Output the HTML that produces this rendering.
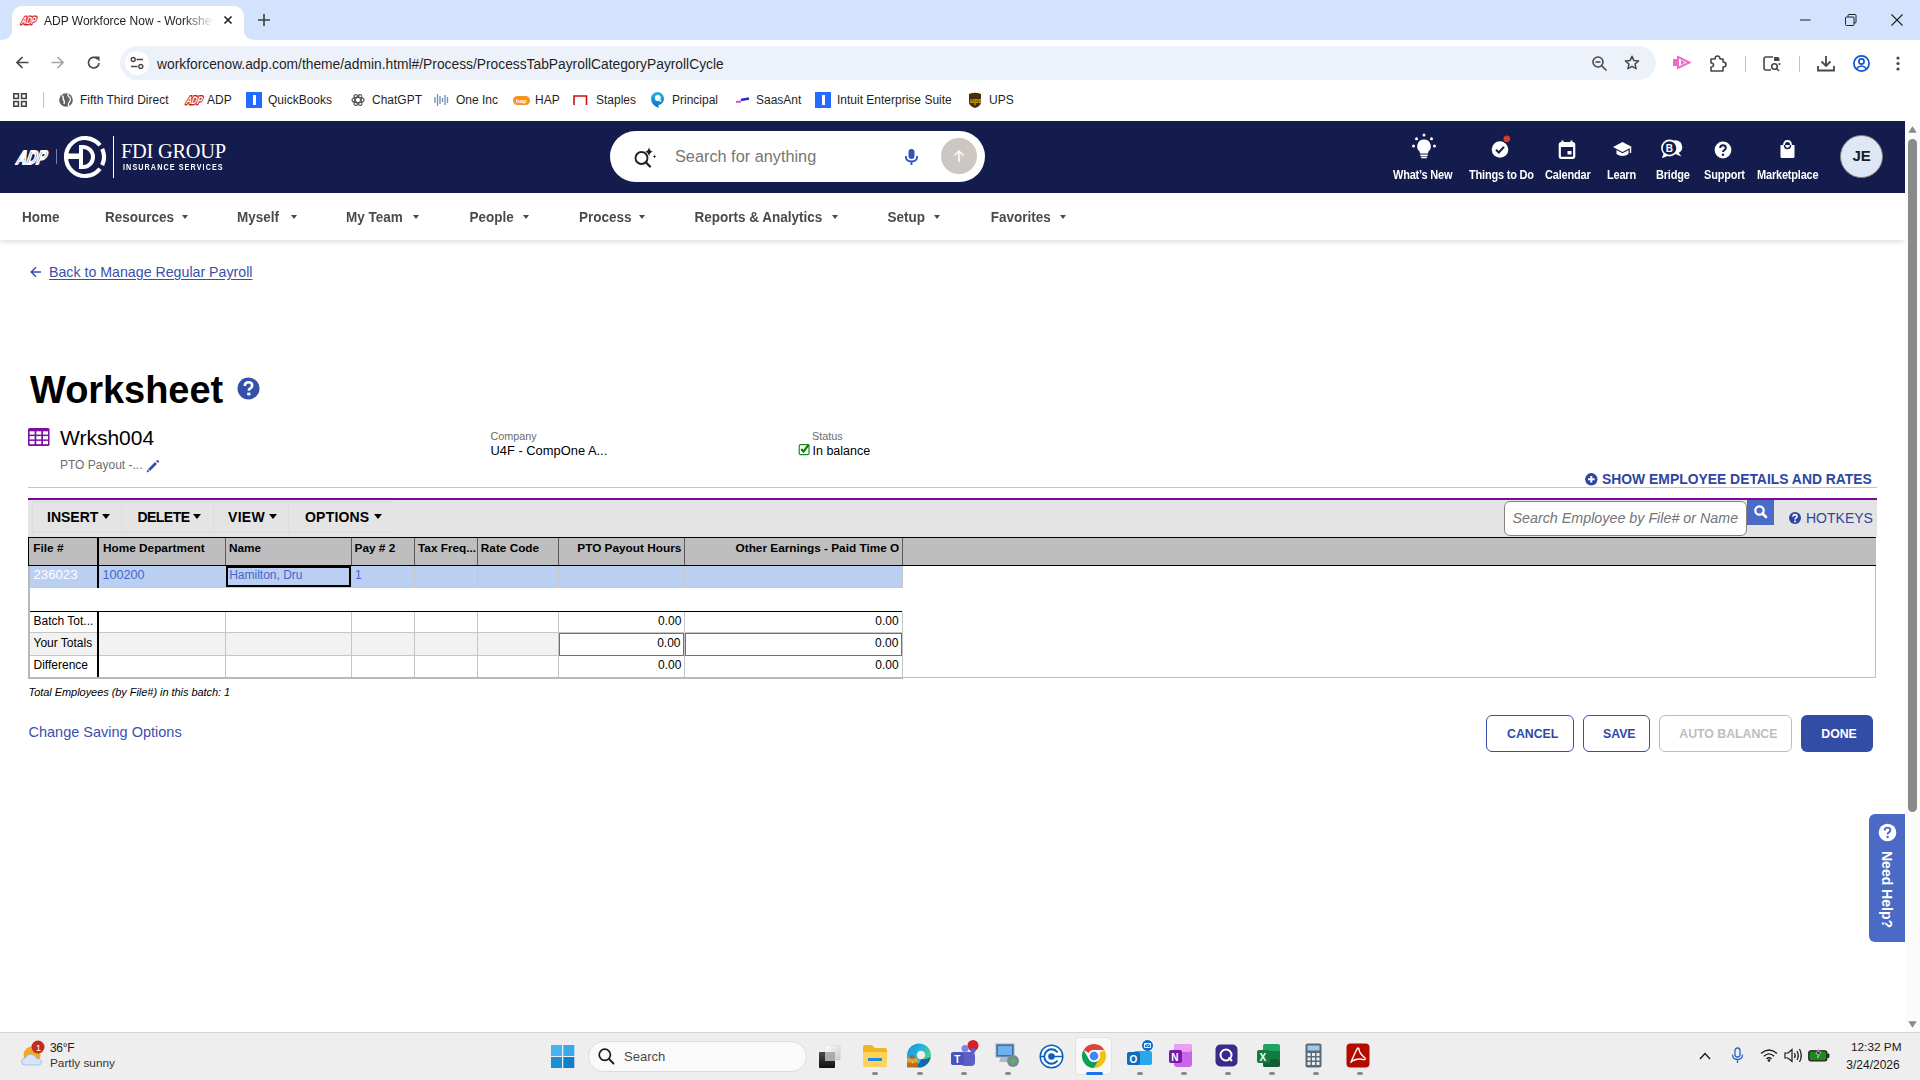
<!DOCTYPE html>
<html><head><meta charset="utf-8">
<style>
*{box-sizing:border-box;margin:0;padding:0}
html,body{width:1920px;height:1080px;overflow:hidden;background:#fff;font-family:"Liberation Sans",sans-serif;position:relative}
.a{position:absolute}
.t{position:absolute;white-space:nowrap;line-height:1}
svg{position:absolute;overflow:visible}
/* browser chrome */
#tabstrip{left:0;top:0;width:1920px;height:40px;background:#d3e3fd}
#tab{left:12px;top:6px;width:232px;height:34px;background:#fff;border-radius:10px 10px 0 0}
#toolbar{left:0;top:40px;width:1920px;height:81px;background:#fff}
#omni{left:120px;top:46px;width:1536px;height:34px;background:#edf2fa;border-radius:17px}
#hdr{left:0;top:121px;width:1905px;height:72px;background:#141b4d}
#nav{left:0;top:193px;width:1905px;height:47px;background:#fff;box-shadow:0 2px 5px rgba(0,0,0,.13)}
#sb{left:1905px;top:121px;width:15px;height:911px;background:#fbfbfb}
#taskbar{left:0;top:1032px;width:1920px;height:48px;background:#eeeeee;border-top:1px solid #d3d3d3}
.nv{top:210.7px;font-size:13.5px;font-weight:700;color:#4a4a4a;transform:scaleY(1.09);transform-origin:0 11px}
.tri{top:215px;width:0;height:0;border-left:3.6px solid transparent;border-right:3.6px solid transparent;border-top:4px solid #4a4a4a}
.tb{top:501px;height:32px;border:1px solid #d5dfe3;border-right:none}
.tbt{top:510px;font-size:14px;font-weight:700;color:#000}
.tt{top:514px;width:0;height:0;border-left:4px solid transparent;border-right:4px solid transparent;border-top:5px solid #000}
.th{top:543px;font-size:11.8px;font-weight:700;color:#000}
.tr{top:568.5px;font-size:12px;color:#4466cc}
.ttl{font-size:12px;color:#000}
.btn{top:728px;font-size:12.3px;font-weight:700}
.dot{top:1072px;width:6px;height:3px;border-radius:1.5px;background:#8a8a8a}
.bm{font-size:12px;color:#1f1f1f;top:94px}
</style></head><body>
<!-- ===== TAB STRIP ===== -->
<div id="tabstrip" class="a"></div>
<div id="tab" class="a"></div>
<!-- tab bottom outward curves -->
<svg style="left:0;top:30px" width="14" height="10"><path d="M0 10 Q12 10 12 0 L12 10 Z" fill="#fff"/></svg>
<svg style="left:244px;top:30px" width="14" height="10"><path d="M0 0 Q0 10 12 10 L0 10 Z" fill="#fff"/></svg>
<!-- ADP favicon -->
<svg style="left:20px;top:15px" width="17" height="10" viewBox="0 0 17 10"><text x="3.5" y="8.6" transform="skewX(-18)" font-family="Liberation Sans" font-weight="700" font-size="10.5" textLength="14.5" lengthAdjust="spacingAndGlyphs" fill="#fff" stroke="#d0271d" stroke-width="2.8" stroke-linejoin="round" paint-order="stroke">ADP</text></svg>
<div class="t" style="left:44px;top:15px;font-size:12px;color:#1f1f1f;width:170px;overflow:hidden;-webkit-mask-image:linear-gradient(90deg,#000 140px,transparent 170px)">ADP Workforce Now - Worksheet</div>
<svg style="left:224px;top:16px" width="8" height="8"><path d="M0.5 0.5 L7.5 7.5 M7.5 0.5 L0.5 7.5" stroke="#1f1f1f" stroke-width="1.6"/></svg>
<svg style="left:258px;top:14px" width="12" height="12"><path d="M6 0 V12 M0 6 H12" stroke="#3c3c3c" stroke-width="1.6"/></svg>
<!-- window controls -->
<svg style="left:1800px;top:19px" width="11" height="2"><path d="M0 1 H10.5" stroke="#1f1f1f" stroke-width="1"/></svg>
<svg style="left:1845px;top:14px" width="12" height="12"><path d="M3 2.5 V1.5 Q3 0.5 4 0.5 H10 Q11 0.5 11 1.5 V8 Q11 9 10 9 H9" fill="none" stroke="#1f1f1f" stroke-width="1"/><rect x="0.5" y="3" width="8.5" height="8.5" rx="1" fill="none" stroke="#1f1f1f" stroke-width="1"/></svg>
<svg style="left:1891px;top:14px" width="12" height="12"><path d="M0.5 0.5 L11.5 11.5 M11.5 0.5 L0.5 11.5" stroke="#1f1f1f" stroke-width="1.1"/></svg>

<!-- ===== TOOLBAR ===== -->
<div id="toolbar" class="a"></div>
<svg style="left:16px;top:56px" width="13" height="13"><path d="M12.5 6.5 H1.5 M6.5 1 L1 6.5 L6.5 12" fill="none" stroke="#474747" stroke-width="1.7"/></svg>
<svg style="left:51px;top:56px" width="13" height="13"><path d="M0.5 6.5 H11.5 M6.5 1 L12 6.5 L6.5 12" fill="none" stroke="#a6a6a6" stroke-width="1.7"/></svg>
<svg style="left:87px;top:56px" width="14" height="14"><path d="M12 7 A5.3 5.3 0 1 1 10.3 2.8" fill="none" stroke="#474747" stroke-width="1.7"/><path d="M7.5 0.5 H12.5 V5.5 Z" fill="#474747"/></svg>
<div id="omni" class="a"></div>
<div class="a" style="left:125px;top:51px;width:24px;height:24px;border-radius:12px;background:#fff"></div>
<svg style="left:130px;top:56px" width="14" height="14"><circle cx="3.2" cy="3.5" r="2" fill="none" stroke="#474747" stroke-width="1.4"/><path d="M6.5 3.5 H13" stroke="#474747" stroke-width="1.5"/><circle cx="10.8" cy="10.5" r="2" fill="none" stroke="#474747" stroke-width="1.4"/><path d="M1 10.5 H7.5" stroke="#474747" stroke-width="1.5"/></svg>
<div class="t" style="left:157px;top:58px;font-size:13.8px;color:#1f1f1f">workforcenow.adp.com/theme/admin.html#/Process/ProcessTabPayrollCategoryPayrollCycle</div>
<svg style="left:1592px;top:56px" width="16" height="16"><circle cx="6" cy="6" r="5" fill="none" stroke="#474747" stroke-width="1.6"/><path d="M3.5 6 H8.5 M9.7 9.7 L14.5 14.5" stroke="#474747" stroke-width="1.6"/></svg>
<svg style="left:1624px;top:55px" width="16" height="16"><path d="M8 1.3 L9.9 5.6 L14.6 6 L11 9.1 L12.1 13.7 L8 11.3 L3.9 13.7 L5 9.1 L1.4 6 L6.1 5.6 Z" fill="none" stroke="#474747" stroke-width="1.5" stroke-linejoin="round"/></svg>
<svg style="left:1673px;top:56px" width="18" height="13"><rect x="0" y="3" width="5" height="7" fill="#f06bc3"/><path d="M5 1 L16.5 6.5 L5 12 Z" fill="none" stroke="#f06bc3" stroke-width="2"/><path d="M8 4 L12 6.5 L8 9 Z" fill="#f06bc3"/></svg>
<svg style="left:1710px;top:55px" width="17" height="17"><path d="M1 4 H5 Q5 1 7.5 1 Q10 1 10 4 H13 V7 Q16 7 16 9.5 Q16 12 13 12 V16 H1 V12 Q3.5 12 3.5 10 Q3.5 8 1 8 Z" fill="none" stroke="#474747" stroke-width="1.6" stroke-linejoin="round"/></svg>
<div class="a" style="left:1745px;top:56px;width:1px;height:16px;background:#a8c7fa"></div>
<svg style="left:1763px;top:56px" width="18" height="16"><path d="M10 1 H3 Q1 1 1 3 V12 Q1 14 3 14 H8" fill="none" stroke="#474747" stroke-width="1.6"/><path d="M11 1 H14.5 Q16.5 1 16.5 3 V5 H11 Z" fill="#474747"/><path d="M16.5 7 V9" stroke="#474747" stroke-width="1.6"/><circle cx="11.5" cy="10.5" r="2.8" fill="none" stroke="#474747" stroke-width="1.6"/><path d="M13.5 12.5 L16 15" stroke="#474747" stroke-width="1.6"/></svg>
<div class="a" style="left:1799px;top:56px;width:1px;height:16px;background:#a8c7fa"></div>
<svg style="left:1817px;top:55px" width="18" height="17"><path d="M9 1 V11 M4.5 6.5 L9 11 L13.5 6.5" fill="none" stroke="#474747" stroke-width="1.8"/><path d="M1 11 V15.5 H17 V11" fill="none" stroke="#474747" stroke-width="1.8"/></svg>
<svg style="left:1853px;top:55px" width="17" height="17"><circle cx="8.5" cy="8.5" r="7.6" fill="none" stroke="#0b57d0" stroke-width="1.7"/><circle cx="8.5" cy="6.5" r="2.6" fill="none" stroke="#0b57d0" stroke-width="1.6"/><path d="M3.6 13.6 Q8.5 8.5 13.4 13.6" fill="none" stroke="#0b57d0" stroke-width="1.6"/></svg>
<svg style="left:1896px;top:56px" width="4" height="15"><circle cx="2" cy="2" r="1.6" fill="#474747"/><circle cx="2" cy="7.5" r="1.6" fill="#474747"/><circle cx="2" cy="13" r="1.6" fill="#474747"/></svg>

<!-- ===== BOOKMARKS ===== -->
<svg style="left:13px;top:93px" width="14" height="14"><rect x="0.8" y="0.8" width="4.6" height="4.6" fill="none" stroke="#474747" stroke-width="1.6"/><rect x="8.6" y="0.8" width="4.6" height="4.6" fill="none" stroke="#474747" stroke-width="1.6"/><rect x="0.8" y="8.6" width="4.6" height="4.6" fill="none" stroke="#474747" stroke-width="1.6"/><rect x="8.6" y="8.6" width="4.6" height="4.6" fill="none" stroke="#474747" stroke-width="1.6"/></svg>
<div class="a" style="left:43px;top:92px;width:1px;height:16px;background:#a8c7fa"></div>
<svg style="left:59px;top:93px" width="14" height="14"><circle cx="7" cy="7" r="6.8" fill="#5f6368"/><path d="M3 2.5 Q5 4 4 6 Q6 8 5 11 M9 1 Q8.5 3.5 11 4.5 Q12 7 10.5 9 Q9 10 9.5 13" fill="none" stroke="#fff" stroke-width="1.3"/></svg>
<div class="t bm" style="left:80px">Fifth Third Direct</div>
<svg style="left:185px;top:94px" width="19" height="11" viewBox="0 0 19 11"><text x="3.5" y="9.5" transform="skewX(-18)" font-family="Liberation Sans" font-weight="700" font-size="11" textLength="16" lengthAdjust="spacingAndGlyphs" fill="#fff" stroke="#d0271d" stroke-width="2.8" stroke-linejoin="round" paint-order="stroke">ADP</text></svg>
<div class="t bm" style="left:207px">ADP</div>
<div class="a" style="left:246px;top:92px;width:16px;height:16px;background:#236cff"></div>
<div class="a" style="left:253px;top:95px;width:2.5px;height:10px;background:#fff"></div>
<div class="t bm" style="left:268px">QuickBooks</div>
<svg style="left:351px;top:93px" width="14" height="14"><g fill="none" stroke="#555" stroke-width="1.2"><ellipse cx="7" cy="7" rx="6" ry="2.6"/><ellipse cx="7" cy="7" rx="6" ry="2.6" transform="rotate(60 7 7)"/><ellipse cx="7" cy="7" rx="6" ry="2.6" transform="rotate(120 7 7)"/></g></svg>
<div class="t bm" style="left:372px">ChatGPT</div>
<svg style="left:434px;top:93px" width="16" height="14"><g stroke="#6b8fb8" stroke-width="1.3"><path d="M1 4 V10 M3.5 1 V13 M6 3 V11 M8.5 5 V9 M11 2 V12 M13.5 4 V10"/></g></svg>
<div class="t bm" style="left:456px">One Inc</div>
<div class="a" style="left:513px;top:96px;width:17px;height:9px;border-radius:5px;background:#f7931e"></div>
<div class="t" style="left:516px;top:97.5px;font-size:6px;color:#fff;font-weight:700">hap</div>
<div class="t bm" style="left:535px">HAP</div>
<svg style="left:573px;top:95px" width="15" height="10"><path d="M1 10 V1 H13.5 V10" fill="none" stroke="#cc1111" stroke-width="1.6"/></svg>
<div class="t bm" style="left:596px">Staples</div>
<svg style="left:650px;top:91px" width="16" height="18"><defs><linearGradient id="pg" x1="0" y1="0" x2="0" y2="1"><stop offset="0" stop-color="#1fb8e0"/><stop offset="1" stop-color="#0a6fc0"/></linearGradient></defs><path d="M7.5 1 A6.5 6.5 0 0 1 14 7.5 A6.5 6.5 0 0 1 8.5 13.9 L8.5 17 Q1 14 1 7.5 A6.5 6.5 0 0 1 7.5 1 Z" fill="url(#pg)"/><circle cx="7.8" cy="7" r="3" fill="#fff"/><path d="M8.5 10 L11 9 L11.5 11 Z" fill="#fff"/></svg>
<div class="t bm" style="left:672px">Principal</div>
<svg style="left:735px;top:96px" width="15" height="8"><path d="M1 6 L6 5.5" stroke="#e04bd0" stroke-width="2"/><path d="M6 4 L14 2.5" stroke="#2b2bc8" stroke-width="2.5"/></svg>
<div class="t bm" style="left:756px">SaasAnt</div>
<div class="a" style="left:815px;top:92px;width:16px;height:16px;background:#236cff"></div>
<div class="a" style="left:822px;top:95px;width:2.5px;height:10px;background:#fff"></div>
<div class="t bm" style="left:837px">Intuit Enterprise Suite</div>
<svg style="left:968px;top:92px" width="14" height="16"><path d="M1 2 Q7 -0.5 13 2 V10 Q13 14 7 16 Q1 14 1 10 Z" fill="#4a2c0a"/><text x="2" y="10.5" font-family="Liberation Sans" font-weight="700" font-size="6.5" fill="#f5b400">ups</text></svg>
<div class="t bm" style="left:989px">UPS</div>

<!-- ===== ADP HEADER ===== -->
<div id="hdr" class="a"></div>
<svg style="left:15px;top:148px" width="34" height="17" viewBox="0 0 34 17"><text x="6" y="15.5" transform="skewX(-20)" font-family="Liberation Sans" font-weight="700" font-size="19" textLength="29" lengthAdjust="spacingAndGlyphs" fill="none" stroke="#fff" stroke-width="2.1" stroke-linejoin="round">ADP</text></svg>
<div class="a" style="left:56px;top:149px;width:1px;height:15px;background:#7a80a8"></div>
<svg style="left:62px;top:134px" width="48" height="46" viewBox="0 0 48 46">
<path d="M37.97 11.30 A19 19 0 1 0 37.97 34.70" fill="none" stroke="#fff" stroke-width="4.2"/>
<path d="M40.22 14.97 A19 19 0 0 1 40.22 31.03" fill="none" stroke="#fff" stroke-width="4.2"/>
<path d="M17 11 H21 A12 12 0 0 1 21 35 H17 Z M21 15 V31 A8 8 0 0 0 21 15 Z" fill="#fff" fill-rule="evenodd"/>
<rect x="3" y="19.5" width="16" height="5.5" fill="#fff"/>
</svg>
<div class="a" style="left:113px;top:136px;width:1.3px;height:42px;background:#fff"></div>
<div class="t" style="left:121px;top:141px;font-family:'Liberation Serif',serif;font-size:20.4px;color:#fff;letter-spacing:-0.25px">FDI GROUP</div>
<div class="t" style="left:122.8px;top:161.5px;font-size:9.4px;color:#fff;font-weight:700;letter-spacing:1.45px;transform:scaleX(0.765);transform-origin:left">INSURANCE SERVICES</div>
<!-- search -->
<div class="a" style="left:610px;top:131px;width:375px;height:51px;border-radius:25.5px;background:#fff"></div>
<svg style="left:634px;top:146px" width="24" height="23"><circle cx="7.5" cy="12" r="6" fill="none" stroke="#1f1f1f" stroke-width="1.9"/><path d="M11.8 16.3 L16 20.5" stroke="#1f1f1f" stroke-width="2.3" stroke-linecap="round"/><path d="M15 1 Q15.5 5 19 5.8 Q15.5 6.6 15 10.5 Q14.5 6.6 11 5.8 Q14.5 5 15 1 Z" fill="#1f1f1f"/><path d="M20.5 8.5 Q20.7 10.2 22 10.5 Q20.7 10.8 20.5 12.5 Q20.3 10.8 19 10.5 Q20.3 10.2 20.5 8.5 Z" fill="#1f1f1f"/></svg>
<div class="t" style="left:675px;top:147.5px;font-size:16.3px;color:#767676">Search for anything</div>
<svg style="left:904px;top:148px" width="15" height="18"><rect x="4.5" y="1" width="6" height="10" rx="3" fill="#3552b5"/><path d="M1.8 8 Q1.8 13.5 7.5 13.5 Q13.2 13.5 13.2 8" fill="none" stroke="#3552b5" stroke-width="1.8"/><path d="M7.5 13.5 V17" stroke="#3552b5" stroke-width="1.8"/></svg>
<div class="a" style="left:941px;top:138px;width:36px;height:36px;border-radius:18px;background:#ccc7c2"></div>
<svg style="left:952px;top:149px" width="14" height="14"><path d="M7 13 V2 M2.5 6.5 L7 2 L11.5 6.5" fill="none" stroke="#fff" stroke-width="1.5"/></svg>
<!-- header icons -->
<svg style="left:1410px;top:132px" width="28" height="28" viewBox="0 0 28 28">
<g fill="#fff"><circle cx="14" cy="3" r="1.5"/><circle cx="3.5" cy="14" r="1.5"/><circle cx="24.5" cy="14" r="1.5"/><circle cx="6.5" cy="6.8" r="1.5"/><circle cx="21.5" cy="6.8" r="1.5"/>
<path d="M14 7.5 A6.8 6.8 0 0 1 18.4 19.5 L18 21.5 H10 L9.6 19.5 A6.8 6.8 0 0 1 14 7.5 Z"/><rect x="10.3" y="22.5" width="7.4" height="1.8" rx="0.5"/><rect x="11" y="24.8" width="6" height="1.5" rx="0.7"/></g></svg>
<svg style="left:1490px;top:134px" width="24" height="25" viewBox="0 0 24 25">
<circle cx="10" cy="15.5" r="8.3" fill="#fff"/><path d="M6 15.8 L8.8 18.5 L14 12.8" fill="none" stroke="#141b4d" stroke-width="2"/>
<circle cx="16.8" cy="4.8" r="4" fill="#d43b2a" stroke="#141b4d" stroke-width="1.3"/></svg>
<svg style="left:1558px;top:140px" width="18" height="19" viewBox="0 0 18 19">
<path d="M4.5 0.5 V3 M13.5 0.5 V3" stroke="#fff" stroke-width="2"/><rect x="1.8" y="3" width="14.4" height="14.8" rx="1.5" fill="none" stroke="#fff" stroke-width="2.2"/><rect x="1.8" y="3" width="14.4" height="4" fill="#fff"/><rect x="9.5" y="11" width="4" height="3.5" fill="#fff"/></svg>
<svg style="left:1612px;top:141px" width="21" height="17" viewBox="0 0 21 17">
<path d="M10.5 1 L20 6 L10.5 11 L1 6 Z" fill="#fff"/><path d="M4.5 9 V13 Q10.5 17 16.5 13 V9 L10.5 12.3 Z" fill="#fff"/><path d="M18.5 7 V12" stroke="#fff" stroke-width="1.4"/></svg>
<svg style="left:1660px;top:139px" width="25" height="20" viewBox="0 0 25 20">
<circle cx="15.5" cy="8" r="6.8" fill="#fff"/><path d="M18 13 L21.5 17.5 L14 14.5 Z" fill="#fff"/>
<circle cx="9.5" cy="9" r="7.6" fill="#141b4d" stroke="#fff" stroke-width="1.6"/><path d="M4.5 14 L2.5 18.5 L8 16.3" fill="#fff" stroke="#fff" stroke-width="1"/>
<text x="5.8" y="12.8" font-family="Liberation Sans" font-weight="700" font-size="10" fill="#fff">B</text></svg>
<svg style="left:1714px;top:141px" width="18" height="18" viewBox="0 0 18 18">
<circle cx="9" cy="9" r="8.4" fill="#fff"/><path d="M6.2 7 Q6.2 4.2 9 4.2 Q11.8 4.2 11.8 6.8 Q11.8 8.4 10 9.3 Q9 9.8 9 11" fill="none" stroke="#141b4d" stroke-width="2"/><circle cx="9" cy="13.7" r="1.2" fill="#141b4d"/></svg>
<svg style="left:1779px;top:140px" width="17" height="19" viewBox="0 0 17 19">
<path d="M1.5 5 H15.5 V16.5 Q15.5 18 14 18 H3 Q1.5 18 1.5 16.5 Z" fill="#fff"/>
<path d="M5 5 Q5 1 8.5 1 Q12 1 12 5" fill="none" stroke="#fff" stroke-width="1.8"/>
<path d="M5.5 5 Q5.5 8.5 8.5 8.5 Q11.5 8.5 11.5 5" fill="none" stroke="#141b4d" stroke-width="1.5"/></svg>
<div class="t" style="left:1393px;top:169.8px;font-size:11px;color:#fff;font-weight:700;letter-spacing:-0.2px;transform:scaleY(1.14);transform-origin:0 10px">What&#8217;s New</div>
<div class="t" style="left:1469px;top:169.8px;font-size:11px;color:#fff;font-weight:700;letter-spacing:-0.2px;transform:scaleY(1.14);transform-origin:0 10px">Things to Do</div>
<div class="t" style="left:1545px;top:169.8px;font-size:11px;color:#fff;font-weight:700;letter-spacing:-0.2px;transform:scaleY(1.14);transform-origin:0 10px">Calendar</div>
<div class="t" style="left:1607px;top:169.8px;font-size:11px;color:#fff;font-weight:700;letter-spacing:-0.2px;transform:scaleY(1.14);transform-origin:0 10px">Learn</div>
<div class="t" style="left:1656px;top:169.8px;font-size:11px;color:#fff;font-weight:700;letter-spacing:-0.2px;transform:scaleY(1.14);transform-origin:0 10px">Bridge</div>
<div class="t" style="left:1704px;top:169.8px;font-size:11px;color:#fff;font-weight:700;letter-spacing:-0.2px;transform:scaleY(1.14);transform-origin:0 10px">Support</div>
<div class="t" style="left:1757px;top:169.8px;font-size:11px;color:#fff;font-weight:700;letter-spacing:-0.2px;transform:scaleY(1.14);transform-origin:0 10px">Marketplace</div>
<div class="a" style="left:1840px;top:135px;width:43px;height:43px;border-radius:21.5px;background:#dde7f6;border:1px solid #8c8070"></div>
<div class="t" style="left:1852.5px;top:147.8px;font-size:15px;color:#1c1c1c;font-weight:700">JE</div>
<div id="nav" class="a"></div>
<div class="t nv" style="left:22px">Home</div>
<div class="t nv" style="left:105px">Resources</div>
<div class="a tri" style="left:181.5px"></div>
<div class="t nv" style="left:237px">Myself</div>
<div class="a tri" style="left:290.7px"></div>
<div class="t nv" style="left:346px">My Team</div>
<div class="a tri" style="left:413.2px"></div>
<div class="t nv" style="left:469.5px">People</div>
<div class="a tri" style="left:523.3px"></div>
<div class="t nv" style="left:579px">Process</div>
<div class="a tri" style="left:638.6px"></div>
<div class="t nv" style="left:694.4px">Reports &amp; Analytics</div>
<div class="a tri" style="left:832.3px"></div>
<div class="t nv" style="left:887.5px">Setup</div>
<div class="a tri" style="left:934.3px"></div>
<div class="t nv" style="left:990.7px">Favorites</div>
<div class="a tri" style="left:1059.6px"></div>

<!-- ===== CONTENT ===== -->
<svg style="left:30px;top:266px" width="12" height="12"><path d="M11 6 H1.5 M6 1.2 L1.2 6 L6 10.8" fill="none" stroke="#3a50a8" stroke-width="1.5"/></svg>
<div class="t" style="left:49px;top:265px;font-size:14.2px;color:#3a50a8;text-decoration:underline;text-underline-offset:2px">Back to Manage Regular Payroll</div>
<div class="t" style="left:30px;top:371px;font-size:38px;font-weight:700;color:#000;letter-spacing:-0.05px">Worksheet</div>
<svg style="left:237px;top:377px" width="23" height="23"><circle cx="11.5" cy="11.5" r="11" fill="#3550a8"/><path d="M7.8 9 Q7.8 5.3 11.5 5.3 Q15.2 5.3 15.2 8.6 Q15.2 10.6 13 11.6 Q11.8 12.2 11.8 13.8" fill="none" stroke="#fff" stroke-width="2.6"/><rect x="10.2" y="15.6" width="3.2" height="2.8" fill="#fff"/></svg>
<svg style="left:28px;top:428px" width="22" height="18"><rect x="0" y="0" width="21.5" height="18" rx="1.5" fill="#7a0fa0"/><g fill="#fff"><rect x="1.6" y="3.3" width="5" height="3.3"/><rect x="8.3" y="3.3" width="5" height="3.3"/><rect x="15" y="3.3" width="5" height="3.3"/><rect x="1.6" y="8.1" width="5" height="3.3"/><rect x="8.3" y="8.1" width="5" height="3.3"/><rect x="15" y="8.1" width="5" height="3.3"/><rect x="1.6" y="12.9" width="5" height="3.3"/><rect x="8.3" y="12.9" width="5" height="3.3"/><rect x="15" y="12.9" width="5" height="3.3"/></g></svg>
<div class="t" style="left:60px;top:427px;font-size:21px;color:#000">Wrksh004</div>
<div class="t" style="left:60px;top:459px;font-size:12px;color:#6e6e6e;letter-spacing:0px">PTO Payout -...</div>
<svg style="left:146px;top:460px" width="13" height="13"><path d="M2 9 L9 2 L11 4 L4 11 Z" fill="#3550a8"/><path d="M10 1 L11 0 Q12 0 13 1 L13 2 L12 3 Z" fill="#3550a8"/><path d="M1.5 9.5 L3.5 11.5 L0.5 12.5 Z" fill="#3550a8"/><path d="M2.8 10.2 L3.2 10.6" stroke="#fff" stroke-width="0.8"/></svg>
<div class="t" style="left:490.5px;top:431px;font-size:10.8px;color:#6a6a6a">Company</div>
<div class="t" style="left:490.5px;top:444.5px;font-size:12.9px;color:#000">U4F - CompOne A...</div>
<div class="t" style="left:812px;top:431px;font-size:10.8px;color:#6a6a6a">Status</div>
<svg style="left:798px;top:442px" width="14" height="14"><rect x="1.2" y="2.7" width="9.8" height="10" rx="1.5" fill="none" stroke="#1a8a1a" stroke-width="1.2"/><path d="M3.2 7 L5.5 9.6 L10.8 2.5" fill="none" stroke="#0a7d0a" stroke-width="2.2"/></svg>
<div class="t" style="left:812.5px;top:444.5px;font-size:12.5px;color:#000">In balance</div>
<svg style="left:1585px;top:473px" width="13" height="13"><circle cx="6.3" cy="6.3" r="6.2" fill="#2f45a0"/><path d="M6.3 3 V9.6 M3 6.3 H9.6" stroke="#fff" stroke-width="2"/></svg>
<div class="t" style="left:1602px;top:473px;font-size:13.9px;font-weight:700;color:#2f45a0">SHOW EMPLOYEE DETAILS AND RATES</div>
<div class="a" style="left:28px;top:487px;width:1849px;height:1px;background:#c4c4c4"></div>
<div class="a" style="left:28px;top:498px;width:1849px;height:2px;background:#7b0a9b"></div>
<!-- toolbar -->
<div class="a" style="left:28px;top:500px;width:1849px;height:37px;background:#e4e4e4"></div>
<div class="a tb" style="left:32px;width:89px"></div>
<div class="a tb" style="left:121px;width:92px"></div>
<div class="a tb" style="left:213px;width:75px"></div>
<div class="a tb" style="left:288px;width:106px"></div>
<div class="t tbt" style="left:47px">INSERT</div><div class="a tt" style="left:102px"></div>
<div class="t tbt" style="left:137.5px;letter-spacing:-0.55px">DELETE</div><div class="a tt" style="left:193px"></div>
<div class="t tbt" style="left:228px;letter-spacing:0.3px">VIEW</div><div class="a tt" style="left:269px"></div>
<div class="t tbt" style="left:305px;letter-spacing:0.2px">OPTIONS</div><div class="a tt" style="left:374px"></div>
<div class="a" style="left:1504px;top:500.5px;width:243px;height:35px;border:1px solid #8c8478;border-radius:6px;background:#fff"></div>
<div class="t" style="left:1512.5px;top:511px;font-size:14.3px;font-style:italic;color:#757575">Search Employee by File# or Name</div>
<div class="a" style="left:1747px;top:500px;width:27px;height:25px;background:#4a6cc8"></div>
<svg style="left:1754px;top:505px" width="14" height="14"><circle cx="5.5" cy="5.5" r="4.2" fill="none" stroke="#fff" stroke-width="2.2"/><path d="M8.5 8.5 L12 12" stroke="#fff" stroke-width="2.6" stroke-linecap="round"/></svg>
<svg style="left:1789px;top:512px" width="13" height="13"><circle cx="6" cy="6" r="6" fill="#2f45a0"/><path d="M4 4.8 Q4 2.6 6 2.6 Q8 2.6 8 4.5 Q8 5.6 6.8 6.1 Q6.1 6.5 6.1 7.5" fill="none" stroke="#fff" stroke-width="1.6"/><rect x="5.2" y="8.6" width="1.8" height="1.6" fill="#fff"/></svg>
<div class="t" style="left:1806px;top:510.5px;font-size:14px;color:#2f45a0">HOTKEYS</div>
<div class="a" style="left:28px;top:565px;width:2px;height:114px;background:#b8b8b8"></div>
<div class="a" style="left:1875px;top:565px;width:1px;height:113px;background:#c0c0c0"></div>
<div class="a" style="left:28px;top:677px;width:875px;height:2px;background:#b8b8b8"></div>
<div class="a" style="left:903px;top:677px;width:973px;height:1px;background:#c0c0c0"></div>
<div class="a" style="left:28px;top:537px;width:1848px;height:29px;background:#bebebe;border-top:1px solid #000;border-bottom:1px solid #000;border-left:1px solid #000"></div>
<div class="a" style="left:225px;top:538px;width:1px;height:27px;background:#5a5a5a"></div>
<div class="a" style="left:351px;top:538px;width:1px;height:27px;background:#5a5a5a"></div>
<div class="a" style="left:414px;top:538px;width:1px;height:27px;background:#5a5a5a"></div>
<div class="a" style="left:477px;top:538px;width:1px;height:27px;background:#5a5a5a"></div>
<div class="a" style="left:558px;top:538px;width:1px;height:27px;background:#5a5a5a"></div>
<div class="a" style="left:684px;top:538px;width:1px;height:27px;background:#5a5a5a"></div>
<div class="a" style="left:902px;top:538px;width:1px;height:27px;background:#5a5a5a"></div>
<div class="a" style="left:97px;top:538px;width:2px;height:27px;background:#000"></div>
<div class="t th" style="left:33.3px">File #</div>
<div class="t th" style="left:103px">Home Department</div>
<div class="t th" style="left:229px">Name</div>
<div class="t th" style="left:354.6px">Pay # 2</div>
<div class="t th" style="left:418px">Tax Freq...</div>
<div class="t th" style="left:480.8px">Rate Code</div>
<div class="t th" style="right:1238.7px">PTO Payout Hours</div>
<div class="t th" style="right:1020.8px">Other Earnings - Paid Time O</div>
<div class="a" style="left:30px;top:566px;width:872px;height:21px;background:#bbcff3"></div>
<div class="a" style="left:30px;top:587px;width:873px;height:1px;background:#c8c8c8"></div>
<div class="a" style="left:414px;top:566px;width:1px;height:21px;background:#c6c6c6"></div>
<div class="a" style="left:477px;top:566px;width:1px;height:21px;background:#c6c6c6"></div>
<div class="a" style="left:558px;top:566px;width:1px;height:21px;background:#c6c6c6"></div>
<div class="a" style="left:684px;top:566px;width:1px;height:21px;background:#c6c6c6"></div>
<div class="a" style="left:902px;top:566px;width:1px;height:22px;background:#c8c8c8"></div>
<div class="a" style="left:351px;top:566px;width:1px;height:21px;background:#c6c6c6"></div>
<div class="a" style="left:97px;top:566px;width:2px;height:22px;background:#000"></div>
<div class="a" style="left:226px;top:566px;width:125px;height:21px;border:2px solid #000"></div>
<div class="t" style="left:33.5px;top:567.5px;font-size:13.2px;color:#fff">236023</div>
<div class="t tr" style="left:102.5px;font-size:12.6px">100200</div>
<div class="t tr" style="left:229.2px">Hamilton, Dru</div>
<div class="t tr" style="left:355px">1</div>
<div class="a" style="left:30px;top:611px;width:872px;height:1px;background:#000"></div>
<div class="a" style="left:30px;top:633px;width:872px;height:22px;background:#f2f2f2"></div>
<div class="a" style="left:30px;top:632px;width:872px;height:1px;background:#c6c6c6"></div>
<div class="a" style="left:30px;top:655px;width:872px;height:1px;background:#c6c6c6"></div>
<div class="a" style="left:97px;top:611px;width:2px;height:66px;background:#000"></div>
<div class="a" style="left:225px;top:612px;width:1px;height:65px;background:#c6c6c6"></div>
<div class="a" style="left:351px;top:612px;width:1px;height:65px;background:#c6c6c6"></div>
<div class="a" style="left:414px;top:612px;width:1px;height:65px;background:#c6c6c6"></div>
<div class="a" style="left:477px;top:612px;width:1px;height:65px;background:#c6c6c6"></div>
<div class="a" style="left:558px;top:612px;width:1px;height:65px;background:#c6c6c6"></div>
<div class="a" style="left:684px;top:612px;width:1px;height:65px;background:#c6c6c6"></div>
<div class="a" style="left:902px;top:612px;width:1px;height:65px;background:#c6c6c6"></div>
<div class="a" style="left:559px;top:633px;width:125px;height:23px;background:#fff;border:1px solid #2e87a6"></div>
<div class="a" style="left:685px;top:633px;width:217px;height:23px;background:#fff;border:1px solid #2e87a6"></div>
<div class="t ttl" style="left:33.5px;top:614.5px">Batch Tot...</div>
<div class="t ttl" style="left:33.5px;top:636.5px">Your Totals</div>
<div class="t ttl" style="left:33.5px;top:658.5px">Difference</div>
<div class="t ttl" style="right:1238.7px;top:614.5px">0.00</div>
<div class="t ttl" style="right:1021.4px;top:614.5px">0.00</div>
<div class="t ttl" style="right:1239.5px;top:636.5px">0.00</div>
<div class="t ttl" style="right:1021.6px;top:636.5px">0.00</div>
<div class="t ttl" style="right:1238.7px;top:658.5px">0.00</div>
<div class="t ttl" style="right:1021.4px;top:658.5px">0.00</div>
<div class="t" style="left:28.5px;top:687px;font-size:11px;font-style:italic;color:#000;letter-spacing:-0.05px">Total Employees (by File#) in this batch: 1</div>
<div class="t" style="left:28.5px;top:725px;font-size:14.5px;color:#3a50b0">Change Saving Options</div>
<div class="a" style="left:1486px;top:715px;width:88px;height:37px;border:1px solid #3550b0;border-radius:6px"></div>
<div class="t btn" style="left:1507px;color:#2f47a8">CANCEL</div>
<div class="a" style="left:1583px;top:715px;width:67px;height:37px;border:1px solid #3550b0;border-radius:6px"></div>
<div class="t btn" style="left:1603px;color:#2f47a8">SAVE</div>
<div class="a" style="left:1659px;top:715px;width:133px;height:37px;border:1px solid #bdbdbd;border-radius:6px"></div>
<div class="t btn" style="left:1679.3px;color:#bdbdbd">AUTO BALANCE</div>
<div class="a" style="left:1801px;top:715px;width:72px;height:37px;background:#324da6;border-radius:6px"></div>
<div class="t btn" style="left:1821.3px;color:#fff">DONE</div>
<div class="a" style="left:1869px;top:814px;width:36px;height:128px;background:#4a6ac6;border-radius:6px 0 0 6px"></div>
<svg style="left:1877.5px;top:822.5px" width="19" height="19"><circle cx="9.5" cy="9.5" r="8.8" fill="#fff"/><path d="M6.6 7.6 Q6.6 4.6 9.5 4.6 Q12.4 4.6 12.4 7.2 Q12.4 8.7 10.6 9.6 Q9.6 10.1 9.6 11.6" fill="none" stroke="#4a6ac6" stroke-width="1.9"/><circle cx="9.6" cy="14" r="1.2" fill="#4a6ac6"/></svg>
<div class="t" style="left:1893.5px;top:851px;font-size:14px;font-weight:700;color:#fff;transform:rotate(90deg);transform-origin:0 0">Need Help?</div>
<div id="sb" class="a"></div>
<svg style="left:1908px;top:126px" width="9" height="7"><path d="M4.5 0.3 L8.8 6.8 H0.2 Z" fill="#8a8a8a"/></svg>
<div class="a" style="left:1908px;top:139px;width:9px;height:673px;border-radius:4.5px;background:#8a8a8a"></div>
<svg style="left:1908px;top:1021px" width="9" height="7"><path d="M0.2 0.2 H8.8 L4.5 6.8 Z" fill="#8a8a8a"/></svg>
<!-- ===== TASKBAR ===== -->
<div id="taskbar" class="a"></div>
<svg style="left:20px;top:1040px" width="30" height="30" viewBox="0 0 30 30">
<circle cx="12" cy="15" r="8.5" fill="#f5a623"/><path d="M5 25 Q1.5 25 1.5 21.5 Q1.5 18 5.5 18 Q7 14 11.5 14.5 Q15.5 15 16.5 18.5 Q21.5 18.5 21.5 22 Q21.5 25 18.5 25 Z" fill="#d6e4f7" stroke="#9db8e0" stroke-width="0.8"/>
<circle cx="18" cy="7" r="6.5" fill="#c42b1c"/><text x="15.8" y="10.5" font-family="Liberation Sans" font-size="9.5" fill="#fff">1</text></svg>
<div class="t" style="left:50px;top:1042px;font-size:12px;color:#1a1a1a;letter-spacing:-0.3px">36°F</div>
<div class="t" style="left:50px;top:1057.5px;font-size:11.8px;color:#333">Partly sunny</div>
<svg style="left:551px;top:1045px" width="24" height="23"><g fill="#1a9de6"><rect x="0" y="0" width="11" height="11" fill="#47b4f0"/><rect x="12.3" y="0" width="11" height="11" fill="#3aa8ea"/><rect x="0" y="12" width="11" height="11" fill="#1c8fd8"/><rect x="12.3" y="12" width="11" height="11" fill="#0f7fcc"/></g></svg>
<div class="a" style="left:588px;top:1041px;width:219px;height:31px;border-radius:15.5px;background:#fafafa;border:1px solid #dcdcdc"></div>
<svg style="left:598px;top:1048px" width="17" height="17"><circle cx="6.8" cy="6.8" r="5.6" fill="none" stroke="#1a1a1a" stroke-width="1.7"/><path d="M11 11 L15.5 15.5" stroke="#1a1a1a" stroke-width="1.8" stroke-linecap="round"/></svg>
<div class="t" style="left:624px;top:1050px;font-size:13px;color:#4a4a4a">Search</div>
<!-- task view -->
<svg style="left:818px;top:1045px" width="26" height="24"><defs><linearGradient id="tv1" x1="0" y1="0" x2="1" y2="1"><stop offset="0" stop-color="#ffffff"/><stop offset="1" stop-color="#c8c8c8"/></linearGradient><linearGradient id="tv2" x1="0" y1="0" x2="0" y2="1"><stop offset="0" stop-color="#4a4a4a"/><stop offset="1" stop-color="#111"/></linearGradient></defs><rect x="6.5" y="0.5" width="16" height="15" rx="1" fill="url(#tv1)" stroke="#e0e0e0" stroke-width="0.8"/><rect x="1" y="7" width="16" height="16" rx="1" fill="url(#tv2)"/><rect x="7" y="7" width="10" height="9" fill="#b8b8b8" opacity="0.9"/></svg>
<!-- explorer -->
<svg style="left:862px;top:1044px" width="26" height="24"><path d="M1 3 Q1 1 3 1 H10 L13 4 H23 Q25 4 25 6 V21 Q25 23 23 23 H3 Q1 23 1 21 Z" fill="#f1b521"/><rect x="1" y="8" width="24" height="15" rx="1.5" fill="#ffd35a"/><rect x="6" y="14" width="14" height="3" fill="#1e88e5"/></svg>
<div class="a dot" style="left:872px"></div>
<!-- edge -->
<svg style="left:906px;top:1043px" width="26" height="26" viewBox="0 0 26 26"><defs><linearGradient id="eg" x1="0" y1="0" x2="1" y2="0.6"><stop offset="0" stop-color="#1f8fe0"/><stop offset="0.55" stop-color="#25b5d8"/><stop offset="1" stop-color="#5fd66a"/></linearGradient></defs>
<circle cx="13" cy="12.5" r="12" fill="url(#eg)"/><circle cx="15" cy="12" r="4.2" fill="#eeeeee"/><path d="M15 16.2 Q20 17 24.5 14 Q23 22 15 24.5 Q11 24.5 9 23 Q13 22 15 16.2 Z" fill="#1462b8"/>
<rect x="1" y="15" width="11" height="9.5" rx="1.2" fill="#b86e12"/><rect x="1" y="15" width="11" height="4.5" rx="1" fill="#e3a03a"/><rect x="5" y="13" width="3" height="2.2" fill="none" stroke="#8a5a18" stroke-width="0.9"/><rect x="5.8" y="18.5" width="1.5" height="1.8" fill="#f5d36a"/></svg>
<div class="a dot" style="left:917px"></div>
<!-- teams -->
<svg style="left:949px;top:1039px" width="32" height="30"><circle cx="24" cy="6.5" r="5.5" fill="#d3202a"/><circle cx="16" cy="9.5" r="3.5" fill="#7b83eb"/><rect x="12" y="13" width="14" height="14" rx="4" fill="#5b5fc7"/><circle cx="24" cy="11.5" r="2.5" fill="#5b5fc7"/><rect x="2" y="13" width="13" height="13" rx="2" fill="#4b53bc"/><text x="5.2" y="23.5" font-family="Liberation Sans" font-weight="700" font-size="10" fill="#fff">T</text></svg>
<div class="a dot" style="left:961px"></div>
<!-- remote desktop -->
<svg style="left:994px;top:1042px" width="26" height="26"><rect x="2" y="2" width="18" height="13" fill="#3b6fb6" stroke="#9ab" stroke-width="1"/><rect x="4" y="4" width="14" height="9" fill="#6fb0f0"/><path d="M7 15 L5 20 H17 L15 15 Z" fill="#b0b8c0"/><circle cx="19" cy="19" r="6" fill="#7a8a90"/><path d="M16 19 H22 M19 16 V22" stroke="#4c4" stroke-width="1.5"/></svg>
<div class="a dot" style="left:1005px"></div>
<!-- C -->
<svg style="left:1038.5px;top:1043.5px" width="25" height="25"><circle cx="12.5" cy="12.5" r="11.3" fill="#fff" stroke="#0a5fbf" stroke-width="1.5"/><path d="M18.02 7.87 A7.2 7.2 0 1 0 18.02 17.13" fill="none" stroke="#0a5fbf" stroke-width="1.9" stroke-linecap="round"/><circle cx="12.5" cy="12.5" r="3.3" fill="#0a5fbf"/><path d="M12.5 12.5 H23.5 M1.5 12.5 H5.5" stroke="#0a5fbf" stroke-width="1.5"/></svg>
<!-- chrome active -->
<div class="a" style="left:1075px;top:1037px;width:37px;height:38px;border-radius:4px;background:#f8f8f8;border:1px solid #e3e3e3"></div>
<svg style="left:1081px;top:1043px" width="26" height="26" viewBox="0 0 26 26"><path d="M13 1 A12 12 0 0 1 23.4 7 H13 A6 6 0 0 0 7.8 10 L2.6 7 A12 12 0 0 1 13 1 Z" fill="#db4437"/><path d="M23.4 7 A12 12 0 0 1 13 25 L18.2 16 A6 6 0 0 0 18.2 10 Z" fill="#f4c20d"/><path d="M13 25 A12 12 0 0 1 2.6 7 L7.8 16 A6 6 0 0 0 18.2 16 Z" fill="#0f9d58"/><circle cx="13" cy="13" r="5.2" fill="#4285f4" stroke="#fff" stroke-width="1.6"/></svg>
<div class="a" style="left:1086px;top:1072px;width:17px;height:3px;border-radius:1.5px;background:#1a73e8"></div>
<!-- outlook -->
<svg style="left:1125px;top:1039px" width="30" height="30"><circle cx="22.5" cy="6.5" r="6" fill="#0a6ed1" stroke="#fff" stroke-width="1"/><path d="M19.5 4.5 H25.5 V8.5 H19.5 Z M19.5 4.5 L22.5 7 L25.5 4.5" fill="none" stroke="#fff" stroke-width="0.9"/><rect x="9" y="12" width="18" height="14" rx="2" fill="#28a8ea"/><rect x="2" y="13" width="13" height="13" rx="2" fill="#0f6cbd"/><text x="4.6" y="23.5" font-family="Liberation Sans" font-weight="700" font-size="10" fill="#fff">O</text></svg>
<div class="a dot" style="left:1137px"></div>
<!-- onenote -->
<svg style="left:1168px;top:1043px" width="25" height="25"><rect x="6" y="1" width="18" height="23" rx="3" fill="#ca64ea"/><rect x="6" y="1" width="18" height="8" rx="3" fill="#e8a0f5"/><rect x="1" y="7" width="13" height="13" rx="2" fill="#7719aa"/><text x="3.3" y="17.5" font-family="Liberation Sans" font-weight="700" font-size="10" fill="#fff">N</text></svg>
<div class="a dot" style="left:1181px"></div>
<!-- purple Q -->
<svg style="left:1215px;top:1044px" width="23" height="23"><rect x="0.5" y="0.5" width="22" height="22" rx="5" fill="#3b2a8a"/><circle cx="11" cy="11" r="5.5" fill="none" stroke="#fff" stroke-width="2"/><path d="M13.5 13.5 L17 17" stroke="#fff" stroke-width="2"/></svg>
<div class="a dot" style="left:1225px"></div>
<!-- excel -->
<svg style="left:1256px;top:1043px" width="25" height="25"><rect x="7" y="1" width="17" height="23" rx="2" fill="#21a366"/><rect x="7" y="8" width="17" height="8" fill="#107c41"/><rect x="7" y="16" width="17" height="8" rx="2" fill="#185c37"/><rect x="1" y="7" width="13" height="13" rx="2" fill="#107c41"/><text x="3.6" y="17.5" font-family="Liberation Sans" font-weight="700" font-size="10" fill="#fff">X</text></svg>
<div class="a dot" style="left:1269px"></div>
<!-- calculator -->
<svg style="left:1305px;top:1043px" width="17" height="25"><rect x="0.5" y="0.5" width="16" height="24" rx="2" fill="#5a6a78"/><rect x="2.5" y="2.5" width="12" height="5" fill="#9fc8ea"/><g fill="#e8eef2"><rect x="2.5" y="10" width="3" height="3"/><rect x="7" y="10" width="3" height="3"/><rect x="11.5" y="10" width="3" height="3"/><rect x="2.5" y="14.5" width="3" height="3"/><rect x="7" y="14.5" width="3" height="3"/><rect x="11.5" y="14.5" width="3" height="3"/><rect x="2.5" y="19" width="3" height="3"/><rect x="7" y="19" width="3" height="3"/><rect x="11.5" y="19" width="3" height="3"/></g></svg>
<div class="a dot" style="left:1313px"></div>
<!-- acrobat -->
<svg style="left:1346px;top:1043px" width="24" height="25"><rect x="0.5" y="0.5" width="23" height="24" rx="4" fill="#b30b00"/><path d="M5 19 Q8 12 11 6 Q12.5 4 13 6 Q13 10 19 15 Q20 17 17 16.5 Q12 15 6 18 Q4.5 20 5 19 Z" fill="none" stroke="#fff" stroke-width="1.4"/></svg>
<div class="a dot" style="left:1357px"></div>
<!-- tray -->
<svg style="left:1699px;top:1052px" width="12" height="8"><path d="M1 7 L6 1.5 L11 7" fill="none" stroke="#1a1a1a" stroke-width="1.4"/></svg>
<svg style="left:1731px;top:1047px" width="13" height="17"><rect x="4" y="1" width="5" height="9" rx="2.5" fill="none" stroke="#2b63c6" stroke-width="1.3"/><path d="M1.5 7.5 Q1.5 12.5 6.5 12.5 Q11.5 12.5 11.5 7.5 M6.5 12.5 V16" fill="none" stroke="#2b63c6" stroke-width="1.3"/></svg>
<svg style="left:1760px;top:1049px" width="18" height="13"><path d="M1 4.5 Q9 -2.5 17 4.5 M3.8 7.3 Q9 2.5 14.2 7.3 M6.5 10 Q9 7.5 11.5 10" fill="none" stroke="#1a1a1a" stroke-width="1.3"/><circle cx="9" cy="11.5" r="1.3" fill="#1a1a1a"/></svg>
<svg style="left:1784px;top:1048px" width="18" height="15"><path d="M1 5 H4 L8 1.5 V13.5 L4 10 H1 Z" fill="none" stroke="#1a1a1a" stroke-width="1.2"/><path d="M10.5 5 Q12 7.5 10.5 10 M13 3 Q15.5 7.5 13 12 M15.5 1 Q19 7.5 15.5 14" fill="none" stroke="#1a1a1a" stroke-width="1.2"/></svg>
<svg style="left:1808px;top:1047px" width="22" height="15"><rect x="0.8" y="3.8" width="18" height="10" rx="2" fill="#1e8a1e" stroke="#1a1a1a" stroke-width="1.3"/><rect x="19.3" y="6.5" width="2" height="4.5" rx="0.8" fill="#1a1a1a"/><path d="M11 0.5 L8 7 H10.5 L9.5 11 L13 5 H10.5 Z" fill="#1a1a1a" stroke="#eee" stroke-width="0.6"/></svg>
<div class="t" style="left:1851px;top:1042px;font-size:11.8px;color:#1a1a1a">12:32 PM</div>
<div class="t" style="left:1846.3px;top:1059px;font-size:12px;color:#1a1a1a">3/24/2026</div>
</body></html>
